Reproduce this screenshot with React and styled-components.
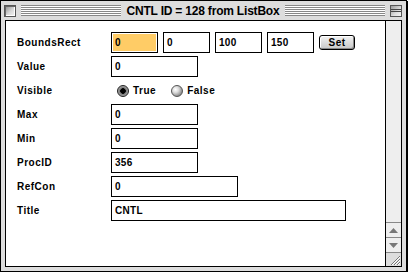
import React from 'react';
import styled, { createGlobalStyle } from 'styled-components';

const Global = createGlobalStyle`
  html, body {
    margin: 0;
    padding: 0;
    background: #fff;
  }
  * { box-sizing: border-box; }
`;

const rows = [
  { label: 'Value', value: '0', width: 87 },
  { label: 'Visible', radio: true },
  { label: 'Max', value: '0', width: 87 },
  { label: 'Min', value: '0', width: 87 },
  { label: 'ProcID', value: '356', width: 87 },
  { label: 'RefCon', value: '0', width: 127 },
  { label: 'Title', value: 'CNTL', width: 235 },
];

const bounds = ['0', '0', '100', '150'];

function App() {
  return (
    <>
      <Global />
      <Window>
        <TitleBar>
          <CloseBox />
          <Stripes />
          <Title>CNTL ID = 128 from ListBox</Title>
          <Stripes />
          <ShadeBox>
            <ShadeLine />
          </ShadeBox>
        </TitleBar>
        <Frame>
          <Content>
            <Form>
              <Label>BoundsRect</Label>
              <Fields>
                {bounds.map((v, i) => (
                  <Field key={i} width={47}>
                    <FieldText selected={i === 0}>{v}</FieldText>
                  </Field>
                ))}
                <SetButton>Set</SetButton>
              </Fields>
              {rows.map((r) => (
                <React.Fragment key={r.label}>
                  <Label>{r.label}</Label>
                  {r.radio ? (
                    <RadioGroup>
                      <RadioItem>
                        <Radio checked />
                        True
                      </RadioItem>
                      <RadioItem>
                        <Radio />
                        False
                      </RadioItem>
                    </RadioGroup>
                  ) : (
                    <Fields>
                      <Field width={r.width}>
                        <FieldText>{r.value}</FieldText>
                      </Field>
                    </Fields>
                  )}
                </React.Fragment>
              ))}
            </Form>
            <ScrollBar>
              <Track />
              <ArrowBox>
                <svg width="9" height="5" viewBox="0 0 9 5">
                  <path d="M4.5 0 L9 5 L0 5 Z" fill="#777" />
                </svg>
              </ArrowBox>
              <ArrowBox>
                <svg width="9" height="5" viewBox="0 0 9 5">
                  <path d="M0 0 L9 0 L4.5 5 Z" fill="#777" />
                </svg>
              </ArrowBox>
              <GrowBox>
                <svg width="13" height="13" viewBox="0 0 13 13">
                  <path d="M3 12 L12 3 M6 12 L12 6 M9 12 L12 9" stroke="#777" strokeWidth="1" />
                  <path d="M4 12 L12 4 M7 12 L12 7 M10 12 L12 10" stroke="#fff" strokeWidth="1" />
                </svg>
              </GrowBox>
            </ScrollBar>
          </Content>
        </Frame>
      </Window>
    </>
  );
}

const Window = styled.div`
  width: 407px;
  height: 272px;
  border: 1px solid #000;
  box-shadow: 1px 1px 0 #000;
  background: #dddddd;
  display: flex;
  flex-direction: column;
  font-family: "Liberation Sans", Arial, sans-serif;
`;

const TitleBar = styled.div`
  height: 19px;
  display: flex;
  align-items: center;
  padding: 0 4px 0 3px;
  gap: 5px;
  background: #dddddd;
`;

const CloseBox = styled.div`
  width: 12px;
  height: 12px;
  border: 1px solid #555;
  background: linear-gradient(135deg, #8c8c8c 0%, #d8d8d8 55%, #f6f6f6 100%);
  box-shadow: inset 1px 1px 0 #666, inset -1px -1px 0 #fff;
`;

const Stripes = styled.div`
  flex: 1;
  height: 11px;
  background: repeating-linear-gradient(to bottom, #888 0 1px, #fff 1px 2px);
`;

const Title = styled.div`
  font-weight: bold;
  font-size: 12px;
  letter-spacing: -0.2px;
  color: #000;
  padding: 0 1px;
  white-space: nowrap;
`;

const ShadeBox = styled.div`
  width: 12px;
  height: 12px;
  border: 1px solid #555;
  background: linear-gradient(135deg, #999 0%, #ddd 60%, #f4f4f4 100%);
  display: flex;
  align-items: center;
  justify-content: center;
`;

const ShadeLine = styled.div`
  width: 10px;
  height: 3px;
  border-top: 1px solid #444;
  border-bottom: 1px solid #444;
`;

const Frame = styled.div`
  flex: 1;
  display: flex;
  padding: 0 4px 4px 4px;
  min-height: 0;
`;

const Content = styled.div`
  flex: 1;
  display: flex;
  border: 1px solid #000;
  background: #fff;
`;

const Form = styled.div`
  flex: 1;
  display: grid;
  grid-template-columns: 94px 1fr;
  grid-auto-rows: 21px;
  row-gap: 3px;
  align-content: start;
  align-items: center;
  padding: 11px 0 0 11px;
`;

const Label = styled.div`
  font-weight: bold;
  font-size: 10px;
  letter-spacing: 0.5px;
  color: #000;
`;

const Fields = styled.div`
  display: flex;
  align-items: center;
  gap: 5px;
  height: 21px;
`;

const Field = styled.div`
  width: ${(p) => p.width}px;
  height: 21px;
  border: 1px solid #000;
  padding: 1px;
  display: flex;
`;

const FieldText = styled.span`
  flex: 1;
  display: flex;
  align-items: center;
  padding-left: 2px;
  background: ${(p) => (p.selected ? '#ffcc66' : 'transparent')};
  font-weight: bold;
  font-size: 10px;
  letter-spacing: 0.3px;
  color: #000;
`;

const SetButton = styled.div`
  width: 36px;
  height: 15px;
  border: 1px solid #000;
  border-radius: 3px;
  background: linear-gradient(to bottom, #f2f2f2, #c8c8c8);
  box-shadow: inset 1px 1px 0 #fff, inset -1px -1px 0 #888;
  display: flex;
  align-items: center;
  justify-content: center;
  font-weight: bold;
  font-size: 10px;
  letter-spacing: 0.5px;
`;

const RadioGroup = styled.div`
  display: flex;
  align-items: center;
  gap: 15px;
  padding-left: 6px;
`;

const RadioItem = styled.div`
  display: flex;
  align-items: center;
  gap: 4px;
  font-weight: bold;
  font-size: 10px;
  letter-spacing: 0.5px;
`;

const Radio = styled.span`
  width: 12px;
  height: 12px;
  border-radius: 50%;
  border: 1px solid ${(p) => (p.checked ? '#222' : '#555')};
  background: ${(p) =>
    p.checked
      ? 'radial-gradient(circle at 50% 50%, #000 0 2.5px, #777 3px, #bbb 6px)'
      : 'radial-gradient(circle at 35% 35%, #fff 0, #ddd 3px, #888 7px)'};
`;

const ScrollBar = styled.div`
  width: 16px;
  border-left: 1px solid #000;
  background: #eeeeee;
  display: flex;
  flex-direction: column;
`;

const Track = styled.div`
  flex: 1;
`;

const ArrowBox = styled.div`
  height: 15px;
  border-top: 1px solid #888;
  display: flex;
  align-items: center;
  justify-content: center;
`;

const GrowBox = styled.div`
  height: 14px;
  border-top: 1px solid #888;
  background: #dddddd;
  display: flex;
  align-items: flex-end;
  justify-content: flex-end;
`;

export default App;
